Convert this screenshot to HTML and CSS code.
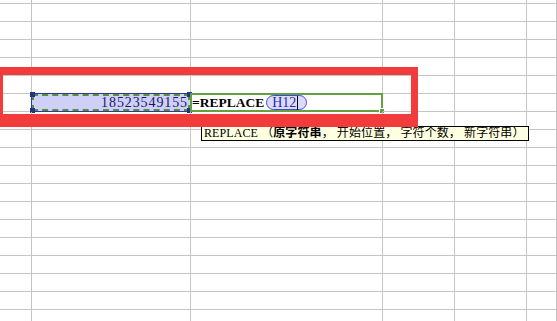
FILE: index.html
```html
<!DOCTYPE html>
<html lang="zh-CN">
<head>
  <meta charset="UTF-8" />
  <meta name="viewport" content="width=device-width, initial-scale=1.0"/>
  <title>REPLACE 函数</title>
  <link rel="stylesheet" href="styles.css">
</head>
<body>
  <div class="sheet">
    <div id="rowsTop"></div>

    <div class="row">
      <div class="cell"></div>
      <div class="cell">
        <div class="copy">
          18523549155
          <span class="knob tl"></span>
          <span class="knob tr"></span>
          <span class="knob bl"></span>
          <span class="knob br"></span>
        </div>
      </div>
      <div class="cell">
        <div class="edit">
          =REPLACE<span class="ref">H12<span class="caret"></span></span>
          <span class="fill-handle"></span>
        </div>
      </div>
      <div class="cell"></div>
      <div class="cell"></div>
      <div class="cell"></div>
    </div>

    <div id="rowsBottom"></div>

    <div class="tip">REPLACE （<b>原字符串</b>， 开始位置， 字符个数， 新字符串）</div>
    <div class="mark"></div>
  </div>

  <script>
    // empty grid rows above and below the formula row
    function addRows(id, count, firstShort) {
      const box = document.getElementById(id);
      for (let r = 0; r < count; r++) {
        const row = document.createElement('div');
        row.className = (firstShort && r === 0) ? 'row first' : 'row';
        for (let c = 0; c < 6; c++) {
          const cell = document.createElement('div');
          cell.className = 'cell';
          row.appendChild(cell);
        }
        box.appendChild(row);
      }
    }

    addRows('rowsTop', 6, true);
    addRows('rowsBottom', 12, false);
  </script>
</body>
</html>
```

FILE: styles.css
```css
* {
  box-sizing: border-box;
}

body {
  margin: 0;
  background: #fff;
  font-family: 'Liberation Serif', 'Noto Sans CJK SC', serif;
  color: #000;
  overflow: hidden;
}

.sheet {
  position: relative;
  height: 321px;
  overflow: hidden;
}

.row {
  display: grid;
  grid-template-columns: 32px 159px 192px 72px 72px 1fr;
  height: 18px;
}

.row.first {
  height: 4px;
}

.cell {
  position: relative;
  border-right: 1px solid #c4c4c4;
  border-bottom: 1px solid #c4c4c4;
}

/* copied source cell with marching ants */
.copy {
  position: absolute;
  inset: -1px;
  background: #cfd0f7;
  border: 1px solid #2a3a96;
  outline: 2px dashed #5b8c3b;
  outline-offset: -3px;
  padding-right: 2px;
  text-align: right;
  font-size: 14px;
  line-height: 17px;
  letter-spacing: 0.9px;
  color: #16166e;
}

.knob {
  position: absolute;
  width: 5px;
  height: 5px;
  background: #23348c;
}

.knob.tl { left: -2px; top: -2px; }
.knob.tr { right: -2px; top: -2px; }
.knob.bl { left: -2px; bottom: -2px; }
.knob.br { right: -2px; bottom: -2px; }

/* cell being edited */
.edit {
  position: absolute;
  inset: -1px;
  border: 2px solid #63a042;
  display: flex;
  align-items: center;
  padding-left: 0;
  font-size: 13.5px;
  font-weight: bold;
  white-space: nowrap;
}

.ref {
  display: inline-flex;
  align-items: center;
  height: 15px;
  margin-left: 2px;
  padding: 0 8px 0 5px;
  border: 1px solid #4646dc;
  border-radius: 8px;
  background: #dcdcfa;
  color: #2b2bb0;
  font-size: 14px;
  font-weight: normal;
}

.caret {
  width: 1px;
  height: 14px;
  margin-left: 1px;
  background: #000;
}

.fill-handle {
  position: absolute;
  right: -4px;
  bottom: -4px;
  width: 6px;
  height: 6px;
  background: #63a042;
  border: 1px solid #fff;
}

.tip {
  position: absolute;
  left: 201px;
  top: 126px;
  height: 15px;
  padding: 0 3px 0 2px;
  border: 1px solid #000;
  background: #ffffe1;
  font-size: 12px;
  line-height: 13px;
  letter-spacing: 0.1px;
  white-space: nowrap;
}

.tip b {
  font-weight: bold;
}

/* red annotation frame */
.mark {
  position: absolute;
  left: -6px;
  top: 67px;
  width: 424px;
  height: 60px;
  border: solid #f23c3c;
  border-width: 8px 7px 13px 9px;
}
```
